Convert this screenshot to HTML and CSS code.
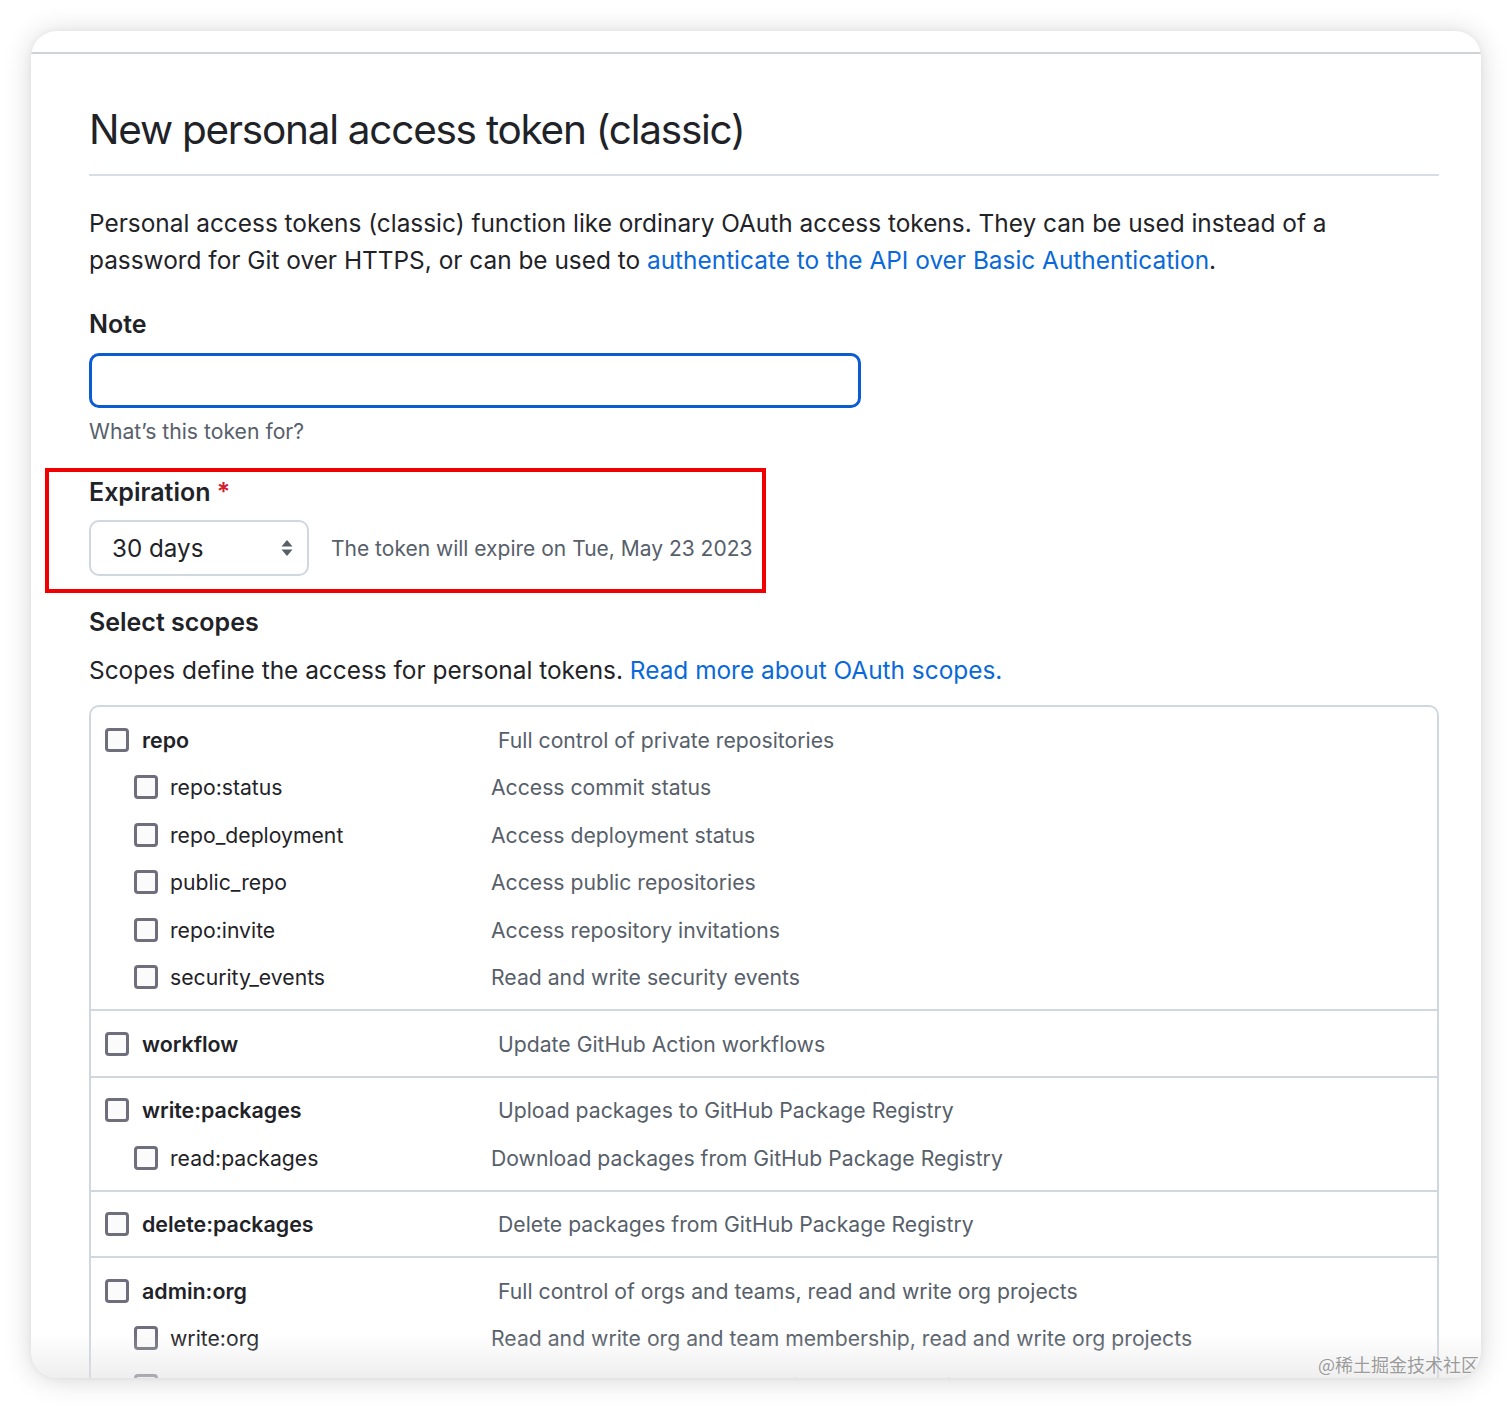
FILE: index.html
```html
<!DOCTYPE html>
<html lang="en">
<head>
<meta charset="utf-8">
<title>New personal access token (classic)</title>
<link rel="stylesheet" href="styles.css">
</head>
<body>
<div class="window">
  <div class="topbar"></div>
  <main class="content">
    <h1 class="title">New personal access token (classic)</h1>
    <p class="intro">Personal access tokens (classic) function like ordinary OAuth access tokens. They can be used instead of a password for Git over HTTPS, or can be used to <a class="link" href="#">authenticate to the API over Basic Authentication</a>.</p>

    <div class="field">
      <div class="label">Note</div>
      <div class="input"></div>
      <div class="hint">What’s this token for?</div>
    </div>

    <div class="field expiration">
      <div class="highlight"></div>
      <div class="label">Expiration <span class="req">*</span></div>
      <div class="exp-row">
        <div class="select">
          <span>30 days</span>
          <svg class="updown" width="12" height="18" viewBox="0 0 12 18"><polygon points="6,1 11.5,7.5 0.5,7.5" fill="#57606a"/><polygon points="6,17 11.5,10.5 0.5,10.5" fill="#57606a"/></svg>
        </div>
        <div class="exp-note">The token will expire on Tue, May 23 2023</div>
      </div>
    </div>

    <div class="label scopes-label">Select scopes</div>
    <p class="scopes-desc">Scopes define the access for personal tokens. <a class="link" href="#">Read more about OAuth scopes.</a></p>

    <div class="scopes">
      <div class="group">
        <div class="row top"><span class="cb"></span><span class="name">repo</span><span class="desc">Full control of private repositories</span></div>
        <div class="row sub"><span class="cb"></span><span class="name">repo:status</span><span class="desc">Access commit status</span></div>
        <div class="row sub"><span class="cb"></span><span class="name">repo_deployment</span><span class="desc">Access deployment status</span></div>
        <div class="row sub"><span class="cb"></span><span class="name">public_repo</span><span class="desc">Access public repositories</span></div>
        <div class="row sub"><span class="cb"></span><span class="name">repo:invite</span><span class="desc">Access repository invitations</span></div>
        <div class="row sub"><span class="cb"></span><span class="name">security_events</span><span class="desc">Read and write security events</span></div>
      </div>
      <div class="group">
        <div class="row top"><span class="cb"></span><span class="name">workflow</span><span class="desc">Update GitHub Action workflows</span></div>
      </div>
      <div class="group">
        <div class="row top"><span class="cb"></span><span class="name">write:packages</span><span class="desc">Upload packages to GitHub Package Registry</span></div>
        <div class="row sub"><span class="cb"></span><span class="name">read:packages</span><span class="desc">Download packages from GitHub Package Registry</span></div>
      </div>
      <div class="group">
        <div class="row top"><span class="cb"></span><span class="name">delete:packages</span><span class="desc">Delete packages from GitHub Package Registry</span></div>
      </div>
      <div class="group">
        <div class="row top"><span class="cb"></span><span class="name">admin:org</span><span class="desc">Full control of orgs and teams, read and write org projects</span></div>
        <div class="row sub"><span class="cb"></span><span class="name">write:org</span><span class="desc">Read and write org and team membership, read and write org projects</span></div>
        <div class="row sub"><span class="cb"></span><span class="name">read:org</span><span class="desc">Read org and team membership, read org projects</span></div>
      </div>
    </div>
  </main>
  <div class="fade"></div>
  <div class="watermark">@稀土掘金技术社区</div>
</div>
</body>
</html>
```

FILE: styles.css
```css
* { box-sizing: border-box; }
html, body { margin: 0; padding: 0; }
body {
  width: 1512px;
  height: 1410px;
  overflow: hidden;
  background: #ffffff;
  font-family: Inter, "Liberation Sans", Arial, "Noto Sans CJK SC", sans-serif;
  color: #1f2328;
}
.window {
  position: relative;
  margin: 31px 0 0 31px;
  width: 1450px;
  height: 1347px;
  border-radius: 26px;
  background: #ffffff;
  overflow: hidden;
  box-shadow: 0 2px 28px rgba(0,0,0,0.16), 0 0 6px rgba(0,0,0,0.05);
}
.topbar {
  height: 23px;
  border-bottom: 2px solid #cfd3d8;
}
.content {
  padding: 0 42px 0 58px;
}
.title {
  margin: 0;
  padding-top: 50px;
  padding-bottom: 18px;
  font-size: 40.5px;
  line-height: 52px;
  font-weight: 400;
  letter-spacing: -1.25px;
  color: #1f2328;
  border-bottom: 2px solid #d8dee4;
}
.intro {
  margin: 29px 0 0 0;
  max-width: 1300px;
  font-size: 24.4px;
  line-height: 37px;
  color: #1f2328;
}
.link { color: #0969da; text-decoration: none; }
.field { margin-top: 27px; }
.label {
  font-size: 25px;
  line-height: 37px;
  font-weight: 600;
  color: #1f2328;
}
.input {
  margin-top: 10px;
  width: 772px;
  height: 55px;
  border: 3px solid #0b5bd3;
  border-radius: 10px;
  background: #fff;
}
.hint {
  margin-top: 8px;
  font-size: 21.2px;
  line-height: 31px;
  color: #57606a;
}
.expiration { position: relative; margin-top: 27px; }
.highlight {
  position: absolute;
  left: -44px;
  top: -6px;
  width: 721px;
  height: 125px;
  border: 4px solid #f00000;
  pointer-events: none;
}
.req { color: #cf222e; }
.exp-row {
  display: flex;
  align-items: center;
  gap: 22px;
  margin-top: 9px;
}
.select {
  width: 220px;
  height: 56px;
  border: 2px solid #d0d7de;
  border-radius: 10px;
  display: flex;
  align-items: center;
  justify-content: space-between;
  padding: 0 14px 0 21px;
  font-size: 24.2px;
  color: #1f2328;
  background: #fff;
}
.updown { display: block; }
.exp-note {
  font-size: 21px;
  color: #57606a;
}
.scopes-label { margin-top: 28px; }
.scopes-desc {
  margin: 11px 0 0 0;
  font-size: 24.4px;
  line-height: 37px;
  color: #1f2328;
}
.scopes {
  margin-top: 16px;
  border: 2px solid #d0d7de;
  border-radius: 10px 10px 0 0;
  border-bottom: none;
}
.group {
  padding: 9px 14px 8px 14px;
  border-top: 2px solid #d0d7de;
}
.group:first-child { border-top: none; }
.row {
  display: flex;
  align-items: center;
  height: 47.5px;
  font-size: 21.2px;
}
.cb {
  flex: none;
  width: 24px;
  height: 24px;
  border: 3px solid #6e6e7c;
  border-radius: 4px;
  background: #fbfbfc;
}
.name { margin-left: 13px; color: #1f2328; }
.top .name { width: 356px; font-weight: 600; font-size: 21.4px; }
.sub { padding-left: 29px; }
.sub .name { width: 321px; margin-left: 12px; }
.desc { color: #57606a; }
.fade {
  position: absolute;
  left: 0; right: 0; bottom: 0;
  height: 44px;
  background: linear-gradient(to bottom, rgba(235,235,235,0), rgba(225,225,225,0.55));
  pointer-events: none;
}
.watermark {
  position: absolute;
  right: 2px;
  bottom: 1px;
  font-family: "Noto Sans CJK SC", sans-serif;
  font-size: 18px;
  color: #9b9b9b;
  text-shadow: 0 0 2px #fff;
}
```
